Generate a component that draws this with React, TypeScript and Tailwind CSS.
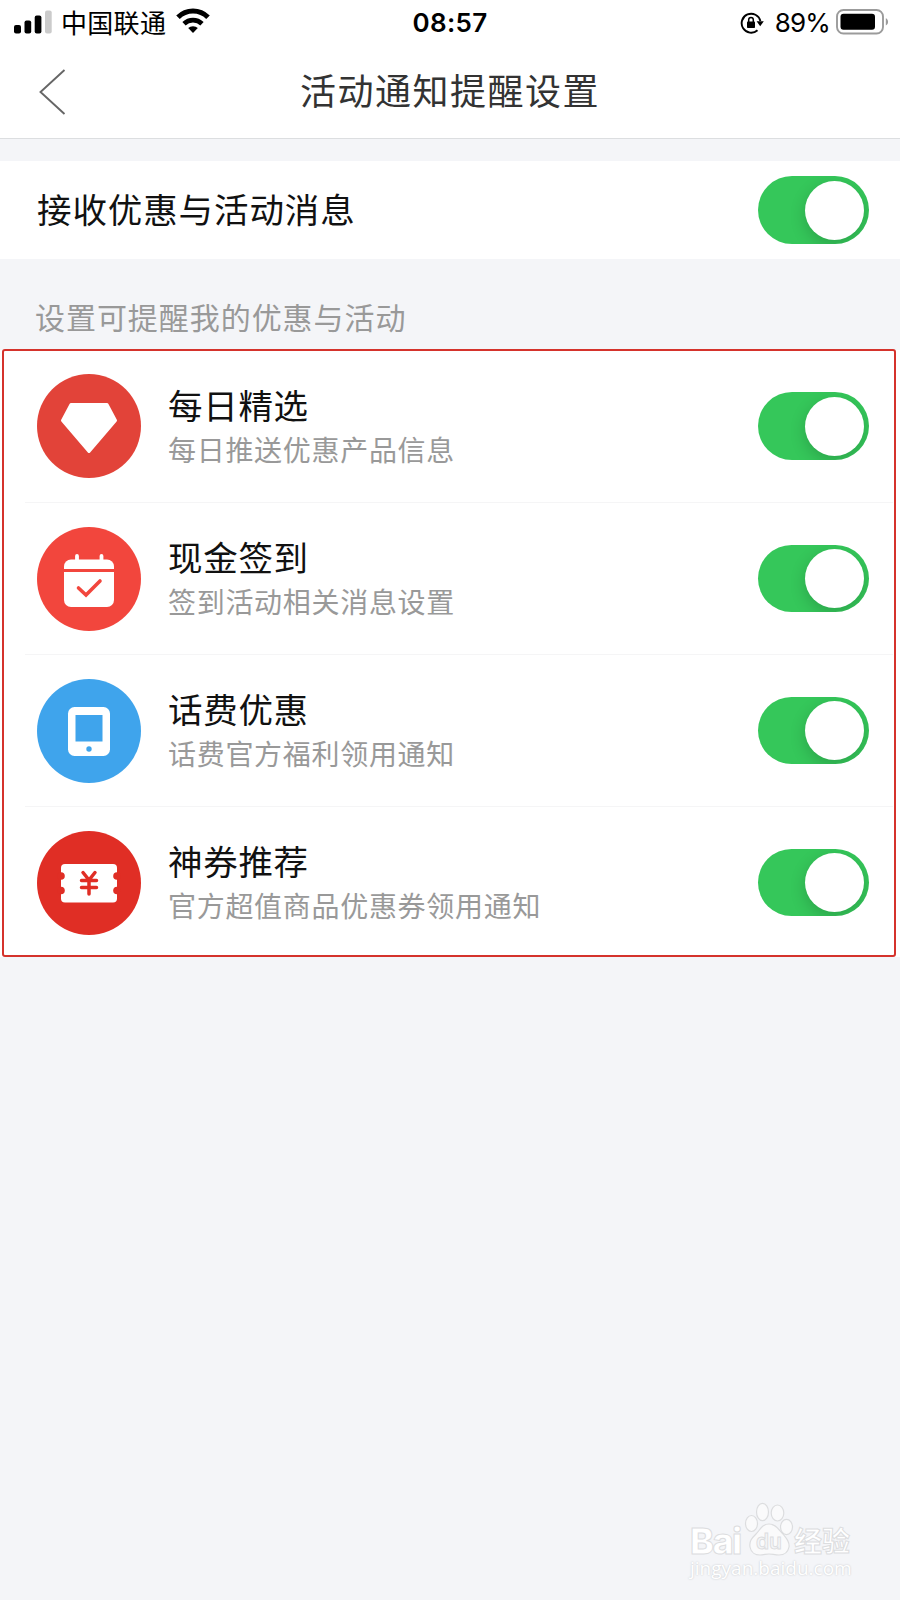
import type { ReactNode } from "react";

interface Channel {
  title: string;
  desc: string;
  color: string;
  icon: ReactNode;
}

const channels: Channel[] = [
  {
    title: "每日精选",
    desc: "每日推送优惠产品信息",
    color: "bg-[#e24339]",
    icon: (
      <path
        d="M34 30.500h36l8.500 16-26.500 31L25.500 46.500z"
        fill="#fff"
        stroke="#fff"
        strokeWidth="3"
        strokeLinejoin="round"
      />
    ),
  },
  {
    title: "现金签到",
    desc: "签到活动相关消息设置",
    color: "bg-[#f2463d]",
    icon: (
      <>
        <path d="M27 42v-2.500a7 7 0 0 1 7-7h36a7 7 0 0 1 7 7V42z" fill="#fff" />
        <path d="M27 45h50v28a7 7 0 0 1-7 7H34a7 7 0 0 1-7-7z" fill="#fff" />
        <path d="M40 29v6M64.500 29v6" stroke="#fff" strokeWidth="3.800" strokeLinecap="round" />
        <path
          d="M41.500 61l7.500 7 14-14"
          fill="none"
          stroke="#f2463d"
          strokeWidth="3.600"
          strokeLinecap="round"
          strokeLinejoin="miter"
        />
      </>
    ),
  },
  {
    title: "话费优惠",
    desc: "话费官方福利领用通知",
    color: "bg-[#3fa4ec]",
    icon: (
      <>
        <rect x="31" y="28" width="42" height="49" rx="6.500" fill="#fff" />
        <rect x="38.500" y="36" width="27" height="26.500" fill="#3fa4ec" />
        <circle cx="52" cy="70" r="2.700" fill="#3fa4ec" />
      </>
    ),
  },
  {
    title: "神券推荐",
    desc: "官方超值商品优惠券领用通知",
    color: "bg-[#e02e25]",
    icon: (
      <>
        <rect x="24" y="33" width="56" height="38.500" rx="4" fill="#fff" />
        <g fill="#e02e25">
          <circle cx="24" cy="45" r="3.800" />
          <circle cx="24" cy="59.500" r="3.800" />
          <circle cx="80" cy="45" r="3.800" />
          <circle cx="80" cy="59.500" r="3.800" />
        </g>
        <path
          d="M46 41.500l6 7.500 6-7.500M44.500 49.500h15M44.500 56.500h15M52 49v14"
          fill="none"
          stroke="#e02e25"
          strokeWidth="3.500"
          strokeLinecap="round"
        />
      </>
    ),
  },
];

function Toggle() {
  return (
    <button
      role="switch"
      aria-checked="true"
      className="flex h-[67.500px] w-[111px] shrink-0 items-center justify-end overflow-hidden rounded-full bg-[#35c75a] pr-[5px]"
    >
      <span className="size-[59px] rounded-full bg-white shadow-[0_5px_16px_rgba(0,0,0,0.18)]" />
    </button>
  );
}

function StatusBar() {
  return (
    <div className="grid h-[46px] grid-cols-3 items-center pl-[14px] pr-[11px] text-black">
      <div className="flex items-center">
        <svg className="-mt-[3px]" width="38" height="24" viewBox="0 0 38 24">
          <rect x="0" y="15" width="7" height="8.500" rx="2" />
          <rect x="10.500" y="10.500" width="6.700" height="13" rx="2" />
          <rect x="20.700" y="5.500" width="6.700" height="18" rx="2" />
          <rect x="31" y="0.500" width="6.700" height="23" rx="2" fill="#cbcbcb" />
        </svg>
        <span className="-mt-[3px] ml-[9px] whitespace-nowrap text-[26px] leading-none tracking-[0.300px]">
          中国联通
        </span>
        <svg className="-mt-[5px] ml-[10px]" width="34" height="26" viewBox="0 0 34 26">
          <path d="M2 9.200a21 21 0 0 1 30 0" fill="none" stroke="#000" strokeWidth="5" />
          <path d="M8 15.700a13 13 0 0 1 18 0" fill="none" stroke="#000" strokeWidth="4.700" />
          <path d="M17 25l-4.800-4.900a6.900 6.900 0 0 1 9.600 0z" />
        </svg>
      </div>
      <div className="-ml-[3px] text-center font-[Inter,sans-serif] text-[26px] font-semibold leading-none tracking-[0.300px]">
        08:57
      </div>
      <div className="flex items-center justify-end">
        <svg width="24" height="22" viewBox="0 0 24 22">
          <path d="M17.500 18.300A9.500 9.500 0 1 1 20.400 9" fill="none" stroke="#000" strokeWidth="1.900" />
          <path d="M16.600 9.200h7.200l-3.600 5z" />
          <rect x="7" y="9.500" width="8" height="6.500" rx="0.800" />
          <path d="M8.700 10V7.700a2.300 2.300 0 0 1 4.600 0V10" fill="none" stroke="#000" strokeWidth="1.500" />
        </svg>
        <span className="ml-[11px] font-[Inter,sans-serif] text-[26px] leading-none tracking-[-0.800px]">89%</span>
        <svg className="-mt-[3px] ml-[6px]" width="53" height="26" viewBox="0 0 53 26">
          <rect x="1" y="1" width="46" height="23.500" rx="6.500" fill="none" stroke="#9b9b9b" strokeWidth="1.900" />
          <rect x="4.500" y="4.700" width="34.500" height="16" rx="3" />
          <path d="M49.800 9.300c3 1.200 3 6 0 7.200z" fill="#9b9b9b" />
        </svg>
      </div>
    </div>
  );
}

function Watermark() {
  return (
    <div className="absolute left-[690px] top-[1502px] text-white">
      <div className="flex h-[54px] items-end">
        <span className="w-[54px] font-[Inter,sans-serif] text-[36px] font-extrabold leading-[30px] tracking-[-1.500px] [-webkit-text-stroke:1px_#dcdddf]">
          Bai
        </span>
        <svg width="50" height="54" viewBox="0 0 50 54" fill="#fafafb" stroke="#dcdddf" strokeWidth="1.200">
          <ellipse cx="7.500" cy="21.500" rx="6" ry="8" />
          <ellipse cx="18.500" cy="10" rx="6" ry="8.700" />
          <ellipse cx="33.500" cy="11" rx="6.300" ry="8" />
          <ellipse cx="42.500" cy="25" rx="6" ry="7.700" />
          <path d="M25 22c-7 0-9 6-13 10-4 4-7 7-6 13 1 6 6 8 10 8 4 0 6-1 9-1s6 1 10 1c5 0 9-3 10-8 1-6-3-9-6-13-4-4-7-10-14-10z" />
          <text
            x="25"
            y="47"
            textAnchor="middle"
            fontFamily="Inter, sans-serif"
            fontSize="21"
            fontWeight="600"
            fill="#f4f5f7"
            strokeWidth="0.900"
          >
            du
          </text>
        </svg>
        <span className="text-[28px] font-bold leading-[32px] [-webkit-text-stroke:1px_#dcdddf]">经验</span>
      </div>
      <div className="font-['Open_Sans',sans-serif] text-[19px] leading-[24px] [text-shadow:0_0_2px_#bfc0c3]">
        jingyan.baidu.com
      </div>
    </div>
  );
}

export default function App() {
  return (
    <div className="relative h-[1600px] w-[900px] overflow-hidden bg-[#f4f5f8] font-['Noto_Sans_CJK_SC',sans-serif]">
      <header className="h-[139px] border-b border-[#dcdee0] bg-white">
        <StatusBar />
        <div className="grid h-[92px] grid-cols-[100px_1fr_100px] items-center">
          <svg className="-mt-[1px] ml-[39px]" width="28" height="46" viewBox="0 0 28 46">
            <path d="M25.500 1L1.500 23l24 22" fill="none" stroke="#666" strokeWidth="1.900" />
          </svg>
          <h1 className="-mt-[6px] text-center text-[36px] leading-none tracking-[1.500px] text-[#333]">
            活动通知提醒设置
          </h1>
        </div>
      </header>

      <section className="mt-[22px] flex h-[98px] items-center justify-between bg-white pl-[37px] pr-[31px]">
        <span className="-mt-[4px] text-[34.500px] leading-none tracking-[0.900px] text-[#111]">
          接收优惠与活动消息
        </span>
        <Toggle />
      </section>

      <p className="flex h-[91px] items-end pb-[17px] pl-[35px] text-[30px] leading-[34px] tracking-[0.950px] text-[#999]">
        设置可提醒我的优惠与活动
      </p>

      <section className="relative h-[607px] bg-white">
        {channels.map((c, i) => (
          <div key={c.title} className="pl-[25px] pr-[7px]">
            <div
              className={`flex h-[152px] items-center pl-3 pr-[24px] ${i > 0 ? "border-t border-[#f5f5f6]" : ""}`}
            >
              <div className={`size-[104px] shrink-0 rounded-full ${c.color}`}>
                <svg width="104" height="104" viewBox="0 0 104 104">
                  {c.icon}
                </svg>
              </div>
              <div className="ml-[27px] flex-1 pt-[2px]">
                <div className="text-[34.500px] leading-[43px] tracking-[0.700px] text-[#111]">{c.title}</div>
                <div className="text-[28px] leading-[46px] tracking-[0.700px] text-[#999]">{c.desc}</div>
              </div>
              <Toggle />
            </div>
          </div>
        ))}
        {/* red highlight frame */}
        <div className="pointer-events-none absolute -top-px right-[4px] bottom-0 left-[2px] rounded-[3px] border-2 border-[#d5332c]" />
      </section>

      <Watermark />
    </div>
  );
}
